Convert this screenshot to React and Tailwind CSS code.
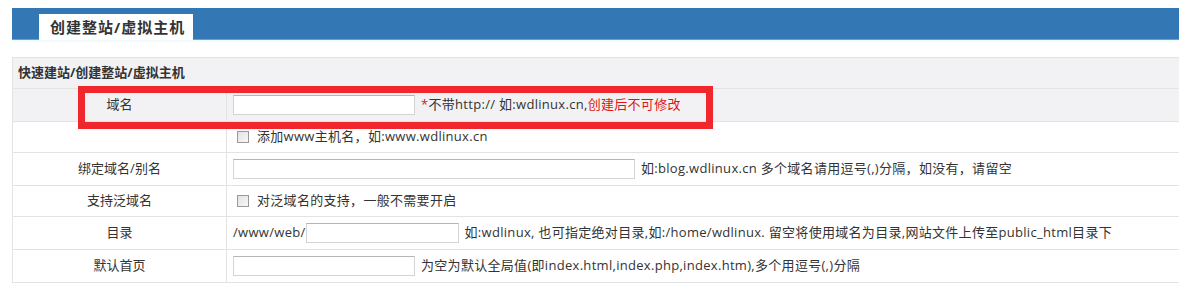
import React from 'react';

const font = { fontFamily: '"Open Sans", "Noto Sans CJK SC", sans-serif' };

function Row({ label, h, gray, children }) {
  return (
    <div className={`flex border-b border-[#e3e3e3] ${gray ? 'bg-[#f2f2f4]' : 'bg-white'}`} style={{ height: h }}>
      <div className="w-[214px] shrink-0 border-r border-[#e3e3e3] flex items-center justify-center text-[13px] text-[#333]">
        {label}
      </div>
      <div className="flex items-center pl-[6px] text-[13px] tracking-[0.3px] text-[#333] whitespace-nowrap">{children}</div>
    </div>
  );
}

function TextInput({ w }) {
  return (
    <input
      type="text"
      className="h-[20px] bg-white border border-[#d4d4d4] border-t-[#b5b5b5] outline-none"
      style={{ width: w }}
    />
  );
}

function Check() {
  return <span className="inline-block w-[12px] h-[12px] border border-[#9a9a9a] bg-gradient-to-br from-[#e2e2e2] to-[#f8f8f8] ml-[4px] mr-[8px]" />;
}

export default function App() {
  return (
    <div className="relative bg-white w-[1179px] h-[285px] pt-[8px] pl-[12px] overflow-hidden" style={font}>
      <div className="h-[32px] bg-[#3378b4] border-b border-[#6f9ec8] pl-[27px] pt-[6px]">
        <div className="w-[154px] h-[26px] bg-white flex items-center pl-[11px] text-[15px] font-bold text-[#333] tracking-[1px]">
          创建整站/虚拟主机
        </div>
      </div>
      <div className="h-[2px] bg-[#eefcff]" />

      <div className="mt-[15px] border-t border-l border-[#e3e3e3]">
        <div className="h-[31px] bg-[#f2f2f4] border-b border-[#e3e3e3] flex items-center pl-[5px] text-[13px] font-bold text-[#333]">
          快速建站/创建整站/虚拟主机
        </div>
        <Row label="域名" h={33} gray>
          <TextInput w={182} />
          <span className="ml-[6px]"><span className="text-[#e01414]">*</span>不带http:// 如:wdlinux.cn,<span className="text-[#e01414]">创建后不可修改</span></span>
        </Row>
        <Row label="" h={31}>
          <Check />
          <span>添加www主机名，如:www.wdlinux.cn</span>
        </Row>
        <Row label="绑定域名/别名" h={33}>
          <TextInput w={402} />
          <span className="ml-[6px]">如:blog.wdlinux.cn 多个域名请用逗号(,)分隔，如没有，请留空</span>
        </Row>
        <Row label="支持泛域名" h={31}>
          <Check />
          <span>对泛域名的支持，一般不需要开启</span>
        </Row>
        <Row label="目录" h={33}>
          <span>/www/web/</span>
          <TextInput w={153} />
          <span className="ml-[6px]">如:wdlinux, 也可指定绝对目录,如:/home/wdlinux. 留空将使用域名为目录,网站文件上传至public_html目录下</span>
        </Row>
        <Row label="默认首页" h={33}>
          <TextInput w={182} />
          <span className="ml-[6px]">为空为默认全局值(即index.html,index.php,index.htm),多个用逗号(,)分隔</span>
        </Row>
      </div>

      <div className="absolute left-[78px] top-[86px] w-[635px] h-[43px] border-[7px] border-[#f0282d] pointer-events-none" />
    </div>
  );
}
